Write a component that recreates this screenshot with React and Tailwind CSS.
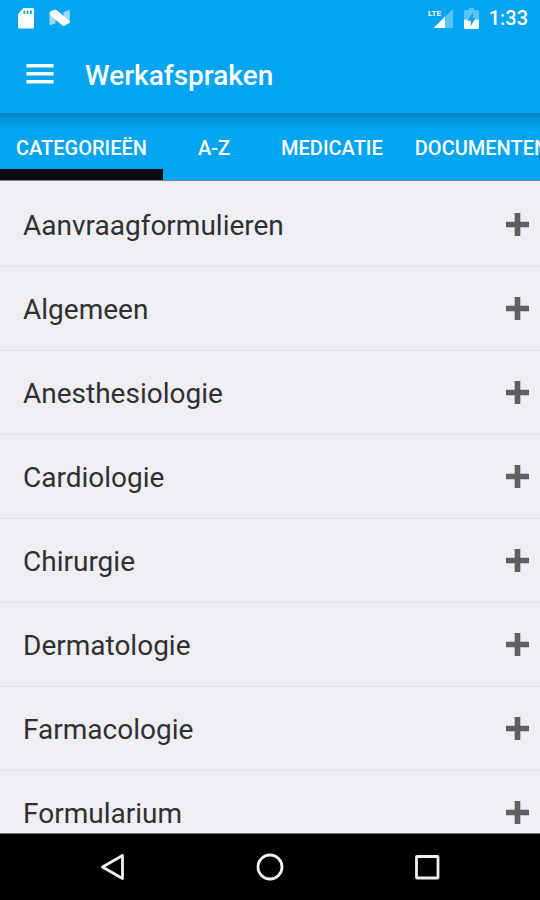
import { useState } from 'react';

const tabs = ['CATEGORIEËN', 'A-Z', 'MEDICATIE', 'DOCUMENTEN'];

const categories = [
  'Aanvraagformulieren',
  'Algemeen',
  'Anesthesiologie',
  'Cardiologie',
  'Chirurgie',
  'Dermatologie',
  'Farmacologie',
  'Formularium'
];

function StatusBar() {
  return (
    <div className="flex h-9 items-center justify-between pr-3 pl-[18px] text-white">
      <div className="flex items-center gap-[15px]">
        <svg className="h-[21px] w-4" viewBox="0 0 16 21" aria-hidden="true">
          <path fill="#fff" fillRule="evenodd" d="M5.5 0H14.5Q16 0 16 1.5V19Q16 20.500 14.500 20.500H1.500Q0 20.500 0 19V6ZM5.500 2.500V6H7.300V2.500ZM8.700 2.500V6H10.500V2.500ZM12 2.500V6H13.800V2.500Z" />
        </svg>
        <svg className="h-[18px] w-[22px]" viewBox="0 0 22 18" aria-hidden="true">
          <path fill="#fff" opacity="0.6" d="M.5 4V16.500L6.500 14.500V4ZM14.500 3L20.800 1V13.500H14.500Z" />
          <path fill="#fff" d="M1.300 2.300L6 .8Q7.300 .5 8.300 1.400L20.500 12Q21.300 13.200 20 14.200L15.500 16.800Q14.300 17.300 13.300 16.400L1.300 6.300Q0 4 1.300 2.300Z" />
        </svg>
      </div>
      <div className="flex items-center">
        <svg className="h-[22px] w-[26px]" viewBox="0 0 26 22" aria-hidden="true">
          <path fill="#fff" opacity="0.35" d="M26 2V21H18V9.500Z" />
          <path fill="#fff" d="M18 9.500V21H6.500Z" />
          <text x="1" y="9" fill="#fff" fontFamily="Roboto, sans-serif" fontSize="8" fontWeight="700">LTE</text>
        </svg>
        <svg className="ml-[11px] h-[21px] w-[15px]" viewBox="0 0 15 21" aria-hidden="true">
          <path fill="#fff" opacity="0.35" d="M5 0H10V2H13.500Q15 2 15 3.500V11.500H0V3.500Q0 2 1.500 2H5Z" />
          <path fill="#fff" d="M0 11.500H15V19.500Q15 21 13.500 21H1.500Q0 21 0 19.500Z" />
          <path fill="#03a4f1" d="M8.800 4.500L3.500 12.800H6.800V18L11.500 10.200H8.800Z" />
        </svg>
        <span className="ml-[10px] text-xl leading-6 font-medium">1:33</span>
      </div>
    </div>
  );
}

function NavBar() {
  return (
    <nav className="flex h-[67px] shrink-0 items-center justify-center gap-[129px] border-t border-[#777] bg-black text-[#f0f0f0]">
      <button type="button" aria-label="Back" className="size-7">
        <svg viewBox="0 0 28 28" fill="none" stroke="currentColor" strokeWidth="2.800" strokeLinejoin="round">
          <path d="M23.500 2.500V25.500L3.500 14Z" />
        </svg>
      </button>
      <button type="button" aria-label="Home" className="size-7">
        <svg viewBox="0 0 28 28" fill="none" stroke="currentColor" strokeWidth="2.800">
          <circle cx="14" cy="14" r="12" />
        </svg>
      </button>
      <button type="button" aria-label="Recent apps" className="size-7">
        <svg viewBox="0 0 28 28" fill="none" stroke="currentColor" strokeWidth="2.800" strokeLinejoin="round">
          <rect x="3.500" y="3.500" width="21.500" height="21.500" rx="0.5" />
        </svg>
      </button>
    </nav>
  );
}

export default function App() {
  const [activeTab, setActiveTab] = useState('CATEGORIEËN');

  return (
    <div className="flex h-screen flex-col overflow-hidden bg-[#efeef3] font-['Roboto',sans-serif]">
      <header className="shrink-0 bg-[#03a4f1]">
        <StatusBar />
        <div className="flex h-[77px] items-center pb-px pl-[26px] text-white">
          <button type="button" aria-label="Menu" className="h-5 w-7">
            <svg viewBox="0 0 28 20" fill="currentColor">
              <path d="M.5 0H27.500V3.500H.5ZM.5 8H27.500V11.500H.5ZM.5 16H27.500V19.500H.5Z" />
            </svg>
          </button>
          <h1 className="ml-[31px] pt-1 text-[28px] leading-8 font-medium">Werkafspraken</h1>
        </div>
      </header>

      <div role="tablist" className="flex h-[68px] shrink-0 overflow-hidden border-b border-[#6f8797] bg-[#03a4f1] bg-linear-to-b from-[#0384c2] to-[#03a4f1] to-[14px]">
        {tabs.map((tab) => (
          <button
            key={tab}
            type="button"
            role="tab"
            aria-selected={tab === activeTab}
            onClick={() => setActiveTab(tab)}
            className={`min-w-[102px] shrink-0 border-b-[11px] px-4 pt-3.5 text-xl leading-6 font-medium text-white ${tab === activeTab ? 'border-[#0c0c0e]' : 'border-transparent'}`}
          >
            {tab}
          </button>
        ))}
      </div>

      <ul className="min-h-0 flex-1 overflow-hidden pt-0.5">
        {categories.map((name) => (
          <li key={name} className="border-b border-[#e2e1e6]">
            <button type="button" className="flex h-[83px] w-full items-center justify-between pr-[11px] pl-[23px] text-left text-[#303033]">
              <span className="pt-0.5 text-[28px] leading-8">{name}</span>
              <svg className="size-[23px]" viewBox="0 0 23 23" fill="#5f5f61" aria-hidden="true">
                <path d="M8.700 0H14.300V8.700H23V14.300H14.300V23H8.700V14.300H0V8.700H8.700Z" />
              </svg>
            </button>
          </li>
        ))}
      </ul>

      <NavBar />
    </div>
  );
}
